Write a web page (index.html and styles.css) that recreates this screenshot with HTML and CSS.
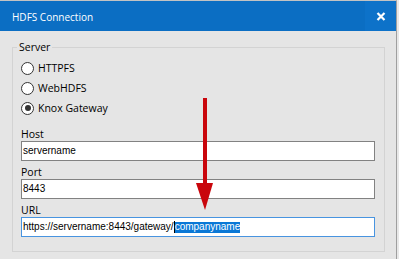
FILE: index.html
```html
<!DOCTYPE html>
<html lang="en">
<head>
	<meta charset="UTF-8">
	<title>HDFS Connection</title>
	<link rel="stylesheet" href="styles.css">
</head>
<body>
	<div class="window">
		<div class="titlebar">
			<span class="title">HDFS Connection</span>
			<span class="close">
				<svg width="10" height="9" viewBox="0 0 10 9">
					<path d="M1.5 1 L8.5 8 M8.5 1 L1.5 8" stroke="#fff" stroke-width="2.2" fill="none"/>
				</svg>
			</span>
		</div>
		<div class="content">
			<fieldset class="group">
				<legend>Server</legend>
				<div class="radios">
					<label class="radio"><span class="circle"></span>HTTPFS</label>
					<label class="radio"><span class="circle"></span>WebHDFS</label>
					<label class="radio"><span class="circle on"></span>Knox Gateway</label>
				</div>
				<div class="field-label first">Host</div>
				<div class="textbox">servername</div>
				<div class="field-label">Port</div>
				<div class="textbox">8443</div>
				<div class="field-label">URL</div>
				<div class="textbox focused">https://servername:8443/gateway/<span class="caret"></span><span class="sel">companyname</span></div>
			</fieldset>
		</div>
		<!-- red callout arrow drawn over the dialog -->
		<svg class="arrow" width="18" height="113" viewBox="0 0 18 113">
			<rect x="7" y="0" width="4" height="88" fill="#c9060c"/>
			<polygon points="0,85 17,85 9,112" fill="#c9060c"/>
		</svg>
	</div>
</body>
</html>
```

FILE: styles.css
```css
html *{
	padding:0;
	margin:0;
}
body{
	background:#e8e8e8;
	width:399px;
	height:259px;
	overflow:hidden;
}
.window{
	position:relative;
	width:396px;
	height:258px;
	border-top:1px solid #c3c3c3;
	border-right:1px solid #9f9f9f;
	background:#e5e5e5;
	font-family:"Segoe UI","Open Sans",sans-serif;
	font-size:10.5px;
	color:#000;
}
.titlebar{
	height:30px;
	background:#0b6ec3;
	display:flex;
	align-items:center;
	justify-content:space-between;
}
.title{
	color:#fff;
	font-size:10px;
	margin-left:12px;
	margin-top:2px;
}
.close{
	width:31px;
	height:30px;
	background:#0d72c9;
	display:flex;
	align-items:center;
	justify-content:center;
}
.content{
	padding:9px 11px 0 12px;
}
.group{
	width:373px;
	box-sizing:border-box;
	border:1px solid #d3d3d3;
	padding:0 9px 14px 8px;
	min-width:0;
}
.group legend{
	padding:0 2px;
	margin-left:-4px;
	line-height:14px;
}
.radios{
	margin-top:4px;
}
.radio{
	display:flex;
	align-items:center;
	height:20px;
	gap:4px;
}
.circle{
	width:13px;
	height:13px;
	box-sizing:border-box;
	border:1px solid #333;
	border-radius:50%;
	background:#fff;
	display:flex;
	align-items:center;
	justify-content:center;
}
.circle.on::after{
	content:"";
	width:6px;
	height:6px;
	border-radius:50%;
	background:#333;
}
.field-label{
	line-height:14px;
	height:14px;
	margin-top:4px;
}
.field-label.first{
	margin-top:9px;
}
.textbox{
	height:20px;
	box-sizing:border-box;
	border:1px solid #828282;
	background:#fff;
	padding:0 1px;
	font-family:"Liberation Sans",Arial,sans-serif;
	font-size:10px;
	line-height:18px;
	white-space:nowrap;
	display:flex;
	align-items:center;
}
.textbox.focused{
	border-color:#4894e0;
}
.caret{
	width:1px;
	height:12px;
	background:#000;
}
.sel{
	background:#0a78d6;
	color:#fff;
	line-height:10px;
	padding:0 0 1px;
}
.arrow{
	position:absolute;
	left:196px;
	top:97px;
}
```
